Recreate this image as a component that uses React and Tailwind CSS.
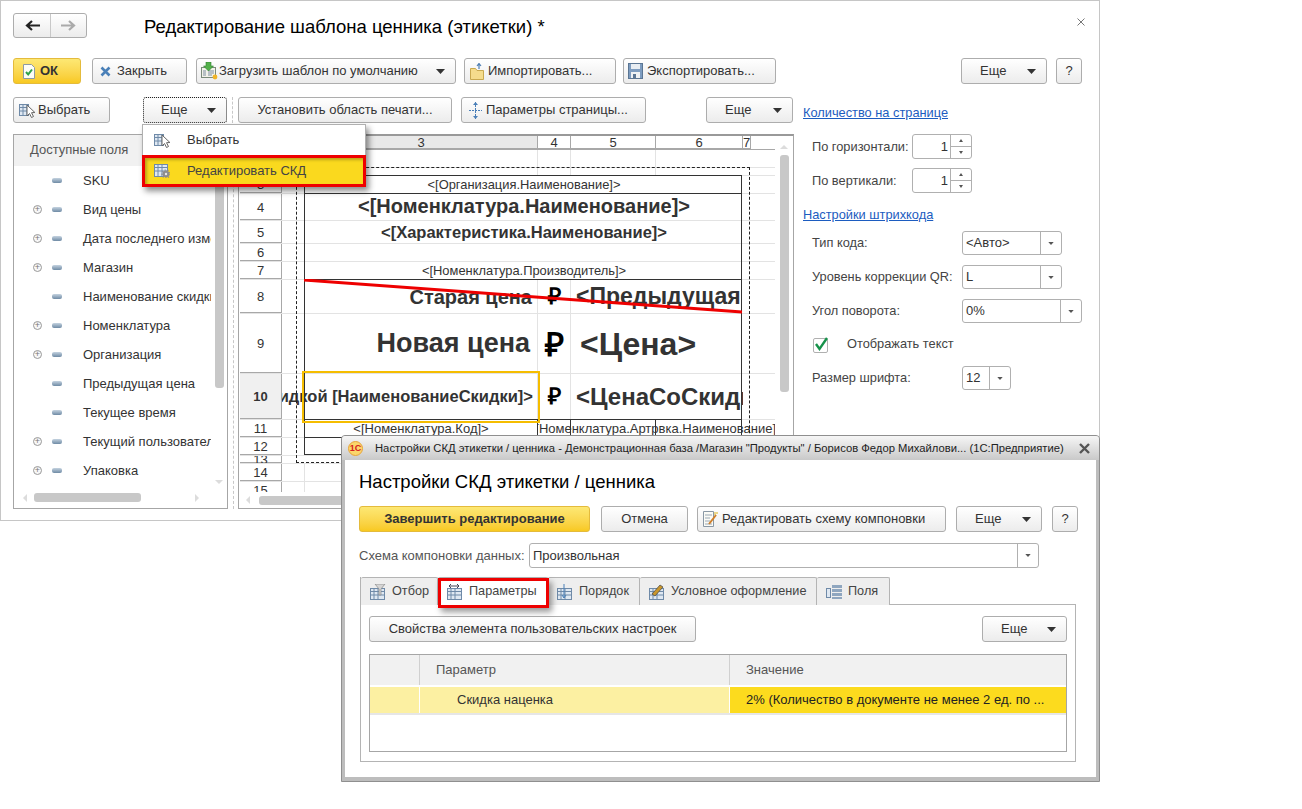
import React from "react";

const Caret = ({ small }) => (
  <svg width={small ? 6 : 9} height={small ? 3 : 5} viewBox="0 0 9 5" className="shrink-0">
    <polygon points="0,0 9,0 4.5,5" fill={small ? "#555" : "#333"} />
  </svg>
);

const Grid = ({ x = 0, y = 3, w = 11, h = 10, c = "#6f8aa8", f = "#dfe8f2" }) => (
  <g>
    <rect x={x + 0.5} y={y + 0.5} width={w} height={h} fill={f} stroke={c} />
    <path d={`M${x + 4} ${y}v${h + 1}M${x + 8} ${y}v${h + 1}M${x} ${y + 3.5}h${w + 1}M${x} ${y + 7}h${w + 1}`} stroke={c} strokeWidth="1" fill="none" />
  </g>
);

const Ico = ({ children, w = 16, h = 16, className = "" }) => (
  <svg width={w} height={h} viewBox={`0 0 ${w} ${h}`} className={"shrink-0 " + className}>{children}</svg>
);

const SelectIcon = () => (
  <Ico w={17} h={17}>
    <Grid x={0} y={2} w={9} h={11} />
    <path d="M8 3l0 11 2.5-2.5 2 4 2-1-2-3.8 3.4-.2z" fill="#fff" stroke="#666" />
  </Ico>
);
const GearTableIcon = () => (
  <Ico w={16} h={14}>
    <Grid x={0} y={0} w={13} h={12} />
    <circle cx="12" cy="10" r="3" fill="#8d8d8d" stroke="#8d8d8d" />
    <circle cx="12" cy="10" r="4" fill="none" stroke="#8d8d8d" strokeWidth="1.2" strokeDasharray="1.4 1.4" />
    <circle cx="12" cy="10" r="1.2" fill="#e8e8e8" />
  </Ico>
);
const OkIcon = () => (
  <Ico w={12} h={15}>
    <path d="M.5.5h8l3 3v11H.5z" fill="#fdfdf6" stroke="#8c9aa5" />
    <path d="M3 8l2.2 2.4L9 5.5" fill="none" stroke="#2fa24a" strokeWidth="2" />
  </Ico>
);
const XIcon = () => (
  <Ico w={11} h={11}>
    <path d="M1.5 1.5l8 8M9.5 1.5l-8 8" stroke="#4a80b8" strokeWidth="2.6" />
  </Ico>
);
const LoadIcon = () => (
  <Ico w={17} h={18}>
    <rect x=".5" y="5.5" width="14" height="10" fill="#f2f2ea" stroke="#7a8a7a" />
    <path d="M2 9h3M2 11h3M2 13h3M7 9h6M7 11h6M7 13h4" stroke="#7c8ea0" />
    <path d="M5 0h5v4h2.5L7.5 9 2.5 4H5z" fill="#53b04a" stroke="#2f7f2f" strokeWidth=".6" />
    <circle cx="14" cy="15" r="2.4" fill="#f0b429" />
  </Ico>
);
const ImportIcon = () => (
  <Ico w={14} h={17}>
    <path d="M.5 5.5h5l1.5 2h6.5v9H.5z" fill="#f5dc8c" stroke="#c9a94f" />
    <path d="M9 6V1M7 3l2-2.5L11 3" stroke="#4e7fb4" fill="none" strokeWidth="1.2" />
  </Ico>
);
const SaveIcon = () => (
  <Ico w={15} h={16}>
    <rect x=".5" y=".5" width="14" height="15" fill="#7d9cc0" stroke="#5b7694" />
    <rect x="3" y="1" width="9" height="5" fill="#e8edf2" />
    <rect x="3" y="9" width="9" height="6" fill="#eef1f4" />
    <rect x="5" y="11" width="3" height="4" fill="#5b7694" />
  </Ico>
);
const PageIcon = () => (
  <Ico w={13} h={17}>
    <path d="M6.5 0v17M0 8.5h13" stroke="#4a7fb8" strokeDasharray="2 1" />
    <path d="M6.5 0L4 3h5zM6.5 17L4 14h5z" fill="#4a7fb8" />
  </Ico>
);
const AttrIcon = () => (
  <span className="block w-[10px] h-[5px] rounded-[2px] bg-gradient-to-b from-[#c5d3e0] to-[#6f8ba5] shrink-0" />
);
const Plus = () => (
  <span className="relative flex items-center justify-center w-[9px] h-[9px] rounded-full border border-[#9a9a9a] bg-[#f7f7f7] text-[#777] text-[9px] leading-none shrink-0">+</span>
);

const Btn = ({ className = "", children, yellow, focus }) => (
  <div
    className={
      "relative flex items-center shrink-0 rounded-[3px] border text-[#333] text-[13px] whitespace-nowrap " +
      (yellow
        ? "border-[#e4bb3c] bg-gradient-to-b from-[#fde873] to-[#f8c91f] "
        : focus
        ? "border-dotted border-[#222] bg-gradient-to-b from-[#ffffff] to-[#ededed] "
        : "border-[#adadad] bg-gradient-to-b from-[#ffffff] to-[#ececec] ") +
      className
    }
  >
    {children}
  </div>
);

const Combo = ({ w, value, h = "h-[24px]", arrowW }) => (
  <div className={"flex items-stretch border border-[#b0b0b0] rounded-[3px] bg-white " + w + " " + h}>
    <div className="flex-1 flex items-center pl-[3px] text-[13px] text-[#333] whitespace-nowrap overflow-hidden">{value}</div>
    <div className={"flex items-center justify-center border-l border-[#b0b0b0] " + arrowW}>
      <Caret small />
    </div>
  </div>
);

const Spin = ({ value }) => (
  <div className="flex items-stretch w-[60px] h-[25px] border border-[#b0b0b0] rounded-[3px] bg-white">
    <div className="flex-1 flex items-center justify-end pr-[2px] text-[13px] text-[#333]">{value}</div>
    <div className="w-[21px] border-l border-[#b0b0b0] flex flex-col">
      <div className="flex-1 flex items-center justify-center border-b border-[#b0b0b0]">
        <svg width="4" height="3"><polygon points="0,3 4,3 2,0" fill="#555" /></svg>
      </div>
      <div className="flex-1 flex items-center justify-center">
        <svg width="4" height="3"><polygon points="0,0 4,0 2,3" fill="#555" /></svg>
      </div>
    </div>
  </div>
);

const treeItems = [
  ["SKU", false], ["Вид цены", true], ["Дата последнего изменения", true], ["Магазин", true],
  ["Наименование скидки", false], ["Номенклатура", true], ["Организация", true], ["Предыдущая цена", false],
  ["Текущее время", false], ["Текущий пользователь", true], ["Упаковка", true],
];

const ScrollArrow = ({ d }) => {
  const pts = { l: "4,0 4,8 0,4", r: "0,0 0,8 4,4", u: "0,4 8,4 4,0", d: "0,0 8,0 4,4" }[d];
  const hz = d === "l" || d === "r";
  return (
    <svg width={hz ? 4 : 8} height={hz ? 8 : 4} className="shrink-0"><polygon points={pts} fill="#dcdcdc" /></svg>
  );
};

const SheetRow = ({ n, h, active, children }) => (
  <div className={"flex shrink-0 border-b border-[#e3e3e3] " + h}>
    <div
      className={
        "w-[42px] shrink-0 flex items-center justify-center border-r border-[#a8a8a8] text-[13px] text-[#333] leading-none overflow-hidden shadow-[inset_0_-1px_0_#a8a8a8] " +
        (active ? "bg-[#f0f0f0] font-bold" : "bg-white")
      }
    >
      {n}
    </div>
    <div className="flex-1 flex items-stretch overflow-hidden text-[#333] whitespace-nowrap">{children}</div>
  </div>
);

const Empty = () => (
  <>
    <div className="w-[23px] shrink-0 border-r border-[#e3e3e3]" />
    <div className="w-[233px] shrink-0 border-r border-[#e3e3e3]" />
    <div className="w-[33px] shrink-0 border-r border-[#e3e3e3]" />
    <div className="w-[85px] shrink-0 border-r border-[#e3e3e3]" />
  </>
);

const Merged = ({ className, children }) => (
  <div className={"ml-[23px] w-[438px] shrink-0 flex items-center justify-center " + className}>{children}</div>
);

const ColHead = ({ w, children, gray }) => (
  <div className={"shrink-0 flex items-center justify-center border-r border-[#a8a8a8] border-b text-[13px] leading-none text-[#333] " + w + (gray ? " bg-[#e9e9e9]" : " bg-white")}>
    {children}
  </div>
);

const Sheet = () => (
  <div className="relative flex-1 overflow-hidden pl-px">
    <div className="flex h-[14px] border-b border-[#a8a8a8]">
      <div className="w-[42px] shrink-0 border-r border-[#a8a8a8]" />
      <div className="w-[23px] shrink-0 bg-[#e9e9e9]" />
      <ColHead w="w-[233px]" gray>3</ColHead>
      <ColHead w="w-[33px]">4</ColHead>
      <ColHead w="w-[85px]">5</ColHead>
      <ColHead w="w-[87px]">6</ColHead>
      <ColHead w="w-[8px]">7</ColHead>
    </div>
    <SheetRow n="" h="h-[18px]"><Empty /></SheetRow>
    <SheetRow n="" h="h-[8px]"><Empty /></SheetRow>
    <SheetRow n="3" h="h-[18px]"><Merged className="text-[12.9px]">{"<[Организация.Наименование]>"}</Merged></SheetRow>
    <SheetRow n="4" h="h-[27px]"><Merged className="text-[20px] font-bold pb-[2px]">{"<[Номенклатура.Наименование]>"}</Merged></SheetRow>
    <SheetRow n="5" h="h-[23px]"><Merged className="text-[16.5px] font-bold">{"<[Характеристика.Наименование]>"}</Merged></SheetRow>
    <SheetRow n="6" h="h-[18px]" />
    <SheetRow n="7" h="h-[18px]"><Merged className="text-[12.9px]">{"<[Номенклатура.Производитель]>"}</Merged></SheetRow>
    <SheetRow n="8" h="h-[34px]">
      <div className="w-[256px] shrink-0 flex items-center justify-end pr-[5px] text-[20px] font-bold border-r border-[#e3e3e3]">Старая цена</div>
      <div className="w-[33px] shrink-0 flex items-center justify-center text-[23px] font-bold text-black border-r border-[#e3e3e3]">₽</div>
      <div className="w-[172px] shrink-0 overflow-hidden flex items-center pl-[5px] text-[23px] font-bold">{"<Предыдущая цена>"}</div>
    </SheetRow>
    <SheetRow n="9" h="h-[60px]">
      <div className="w-[256px] shrink-0 flex items-center justify-end pr-[7px] text-[27px] font-bold border-r border-[#e3e3e3]">Новая цена</div>
      <div className="w-[33px] shrink-0 flex items-center justify-center pt-[3px] text-[33px] font-bold text-black border-r border-[#e3e3e3]">₽</div>
      <div className="w-[172px] shrink-0 overflow-hidden flex items-center pl-[9px] text-[32px] font-bold">{"<Цена>"}</div>
    </SheetRow>
    <SheetRow n="10" h="h-[46px]" active>
      <div className="w-[256px] shrink-0 flex items-center justify-end pr-[4px] text-[16.5px] font-bold border-r border-[#e3e3e3] overflow-hidden">{"<Цена со скидкой [НаименованиеСкидки]>"}</div>
      <div className="w-[33px] shrink-0 flex items-center justify-center text-[23px] font-bold text-black border-r border-[#e3e3e3]">₽</div>
      <div className="w-[172px] shrink-0 overflow-hidden flex items-center pl-[5px] text-[24px] font-bold">{"<ЦенаСоСкидкой>"}</div>
    </SheetRow>
    <SheetRow n="11" h="h-[18px]">
      <div className="ml-[23px] w-[233px] shrink-0 flex items-center justify-center text-[13px] border-r border-[#333]">{"<[Номенклатура.Код]>"}</div>
      <div className="relative w-[238px] shrink-0 flex items-center justify-end text-[13px] overflow-hidden">
        {"<[Номенклатура.Артрвка.Наименование]"}
        <span className="absolute left-[32px] top-0 bottom-0 border-l border-[#333]" />
        <span className="absolute left-[117px] top-0 bottom-0 border-l border-[#333]" />
      </div>
    </SheetRow>
    <SheetRow n="12" h="h-[18px]" />
    <SheetRow n="13" h="h-[8px]" />
    <SheetRow n="14" h="h-[18px]"><Empty /></SheetRow>
    <SheetRow n="15" h="h-[18px]"><Empty /></SheetRow>

    {/* page boundaries, print-area box and drawing objects, all over the cells */}
    <div className="absolute left-[57px] top-[31px] w-[454px] h-[296px] border border-dashed border-[#222]" />
    <div className="absolute left-[65px] top-[39px] w-[438px] h-[280px] border border-[#333]">
      <div className="h-[18px] border-b border-[#333]" />
      <div className="h-[86px] border-b border-[#333]" />
      <div className="h-[140px] border-b border-[#333]" />
      <div className="h-[18px] border-b border-[#333]" />
    </div>
    <svg width="440" height="36" className="absolute left-[65px] top-[143px]">
      <line x1="0" y1="1" x2="438" y2="33" stroke="#ee0000" strokeWidth="3" />
    </svg>
    <div className="absolute left-[63px] top-[235px] w-[238px] h-[52px] border-2 border-[#f5bd00]" />
  </div>
);

const Panels = () => (
  <div className="flex h-[375px] mt-[11px]">
    <div className="w-[215px] shrink-0 border border-[#a6a6a6] flex flex-col bg-white">
      <div className="h-[31px] shrink-0 bg-[#f1f1f1] flex items-center pl-[16px] pb-[2px] text-[13px] text-[#555]">Доступные поля</div>
      <div className="flex-1 flex min-h-0">
        <div className="w-[197px] shrink-0 overflow-hidden">
          {treeItems.map(([t, plus]) => (
            <div key={t} className="flex items-center h-[29px] whitespace-nowrap text-[13px] text-[#333]">
              <span className="w-[19px] shrink-0" />
              <span className="w-[13px] shrink-0 flex">{plus && <Plus />}</span>
              <span className="w-[6px] shrink-0" />
              <AttrIcon />
              <span className="w-[21px] shrink-0" />
              <span>{t}</span>
            </div>
          ))}
        </div>
        <div className="flex-1 flex flex-col items-center">
          <div className="w-[9px] h-[222px] bg-[#c8c8c8] rounded-b-[3px]" />
          <div className="mt-[92px]"><ScrollArrow d="d" /></div>
        </div>
      </div>
      <div className="h-[17px] shrink-0 flex items-center pl-[9px] pb-[4px]">
        <ScrollArrow d="l" />
        <div className="ml-[7px] w-[107px] h-[9px] rounded-[3px] bg-[#c8c8c8]" />
        <div className="ml-[54px]"><ScrollArrow d="r" /></div>
      </div>
    </div>
    <div className="w-[10px] shrink-0 flex justify-center">
      <div className="border-l border-dashed border-[#c8c8c8]" />
    </div>
    <div className="w-[556px] shrink-0 border border-[#a6a6a6] border-t-2 border-t-[#999] flex flex-col bg-white">
      <div className="flex flex-1 min-h-0">
        <Sheet />
        <div className="w-[18px] shrink-0 flex flex-col items-center pt-[9px]">
          <ScrollArrow d="u" />
          <div className="mt-[6px] w-[9px] h-[237px] rounded-[3px] bg-[#c8c8c8]" />
        </div>
      </div>
      <div className="h-[16px] shrink-0 flex items-center pl-[7px]">
        <ScrollArrow d="l" />
        <div className="ml-[9px] w-[100px] h-[9px] rounded-[3px] bg-[#c8c8c8]" />
      </div>
    </div>
  </div>
);

const Right = () => (
  <div className="ml-[9px] w-[285px] text-[12.8px] text-[#444]">
    <div className="h-[16px] mt-[8px] text-[#1c5cc0] underline leading-[16px]">Количество на странице</div>
    <div className="flex items-center mt-[13px] pl-[9px]"><span className="w-[100px]">По горизонтали:</span><Spin value="1" /></div>
    <div className="flex items-center mt-[9px] pl-[9px]"><span className="w-[100px]">По вертикали:</span><Spin value="1" /></div>
    <div className="h-[16px] mt-[14px] text-[#1c5cc0] underline leading-[16px]">Настройки штрихкода</div>
    <div className="flex items-center mt-[8px] pl-[9px]"><span className="w-[150px]">Тип кода:</span><Combo w="w-[100px]" value="<Авто>" arrowW="w-[21px]" /></div>
    <div className="flex items-center mt-[10px] pl-[9px]"><span className="w-[150px]">Уровень коррекции QR:</span><Combo w="w-[100px]" value="L" arrowW="w-[21px]" /></div>
    <div className="flex items-center mt-[10px] pl-[9px]"><span className="w-[150px]">Угол поворота:</span><Combo w="w-[120px]" value="0%" arrowW="w-[21px]" /></div>
    <div className="flex items-center mt-[12px] pl-[10px] h-[18px]">
      <div className="relative w-[15px] h-[15px] border border-[#b0b0b0] rounded-[2px] bg-white mt-[2px]">
        <svg width="16" height="16" className="absolute -left-px -top-[3px]"><path d="M3 8l3.5 5L14 2" fill="none" stroke="#16924a" strokeWidth="2.4" /></svg>
      </div>
      <span className="ml-[19px]">Отображать текст</span>
    </div>
    <div className="flex items-center mt-[13px] pl-[9px]"><span className="w-[150px]">Размер шрифта:</span><Combo w="w-[49px]" value="12" arrowW="w-[21px]" /></div>
  </div>
);

const MainWindow = () => (
  <div className="w-[1100px] h-[521px] border border-[#c6c6c6] pl-[12px] pr-[17px] bg-white">
    <div className="flex items-center mt-[12px] h-[25px]">
      <div className="flex w-[74px] h-[25px] rounded-[3px] border border-[#adadad] bg-gradient-to-b from-[#ffffff] to-[#ececec]">
        <div className="w-[37px] flex items-center justify-center border-r border-[#c8c8c8]">
          <svg width="15" height="11"><path d="M15 5.5H3M7 1L2 5.5 7 10" fill="none" stroke="#222" strokeWidth="2.2" /></svg>
        </div>
        <div className="flex-1 flex items-center justify-center">
          <svg width="15" height="11"><path d="M0 5.5h12M8 1l5 4.5L8 10" fill="none" stroke="#aaa" strokeWidth="2.2" /></svg>
        </div>
      </div>
      <div className="ml-[57px] pt-[3px] text-[18.5px] text-black whitespace-nowrap">Редактирование шаблона ценника (этикетки) *</div>
      <svg width="8" height="8" className="ml-auto mr-[-3px] -mt-[7px]"><path d="M.5.5l7 7M7.5.5l-7 7" stroke="#777" strokeWidth="1" /></svg>
    </div>

    <div className="flex mt-[20px] h-[26px]">
      <Btn yellow className="w-[68px] pl-[9px] gap-[4px] font-bold"><OkIcon /><span className="ml-[1px]">ОК</span></Btn>
      <Btn className="w-[95px] ml-[11px] pl-[7px] gap-[6px]"><XIcon />Закрыть</Btn>
      <Btn className="w-[260px] ml-[9px] pl-[4px] gap-[1px]"><LoadIcon />Загрузить шаблон по умолчанию<span className="ml-auto mr-[10px]"><Caret /></span></Btn>
      <Btn className="w-[152px] ml-[8px] pl-[5px] gap-[4px]"><ImportIcon />Импортировать...</Btn>
      <Btn className="w-[153px] ml-[7px] pl-[4px] gap-[4px]"><SaveIcon />Экспортировать...</Btn>
      <Btn className="w-[86px] ml-auto pl-[18px]">Еще<span className="ml-auto mr-[10px]"><Caret /></span></Btn>
      <Btn className="w-[26px] ml-[9px] justify-center">?</Btn>
    </div>

    <div className="flex mt-[13px]">
      <div className="w-[781px] shrink-0">
        <div className="flex h-[26px]">
          <Btn className="w-[97px] pl-[5px] gap-[2px]"><SelectIcon />Выбрать</Btn>
          <Btn focus className="w-[84px] ml-[33px] pl-[17px]">Еще<span className="ml-auto mr-[10px]"><Caret /></span></Btn>
          <div className="w-[11px] shrink-0 flex justify-center"><div className="border-l border-dashed border-[#c8c8c8]" /></div>
          <Btn className="w-[214px] justify-center">Установить область печати...</Btn>
          <Btn className="w-[185px] ml-[9px] pl-[7px] gap-[4px]"><PageIcon />Параметры страницы...</Btn>
          <Btn className="w-[87px] ml-[60px] pl-[18px]">Еще<span className="ml-auto mr-[10px]"><Caret /></span></Btn>
        </div>
        <Panels />
      </div>
      <Right />
    </div>
  </div>
);

const Menu = () => (
  <div className="absolute left-[142px] top-[124px] w-[224px] shadow-[3px_4px_6px_rgba(0,0,0,0.45)] bg-white">
    <div className="h-[31px] border border-b-0 border-[#b0b0b0] flex items-center pl-[11px] text-[13px] text-[#333]">
      <SelectIcon /><span className="ml-[16px]">Выбрать</span>
    </div>
    <div className="h-[32px] border-[3px] border-[#ee0000] bg-[#fad91e] flex items-center pl-[9px] text-[13px] text-[#444] shadow-[inset_2px_2px_3px_rgba(0,0,0,0.25)]">
      <GearTableIcon /><span className="ml-[17px]">Редактировать СКД</span>
    </div>
  </div>
);

const Tab = ({ w, icon, label, active }) => (
  <div
    className={
      "flex items-center h-[28px] shrink-0 text-[12.7px] text-[#444] border-t border-r border-[#b4b4b4] rounded-t-[2px] " +
      w + " " + (active ? "bg-white" : "bg-[#eeeeee]")
    }
  >
    {icon}
    <span className="ml-[5px]">{label}</span>
  </div>
);

const TabIcon = ({ top }) => (
  <Ico w={18} h={16} className="ml-[8px]">
    <Grid x={1} y={4} w={14} h={11} />
    {top}
  </Ico>
);

const Dialog = () => (
  <div className="absolute left-[341px] top-[435px] w-[759px] h-[347px] rounded-t-[4px] border border-[#8f8f8f] bg-[#bdbdbd] flex flex-col px-[3px] pb-[4px] text-[13px]">
    <div className="h-[24px] shrink-0 -mx-[3px] flex items-center bg-gradient-to-b from-[#f6f6f6] to-[#c9c9c9] rounded-t-[3px] text-[11.26px] text-[#222] whitespace-nowrap">
      <span className="ml-[6px] w-[15px] h-[15px] rounded-full border border-[#e8a33a] bg-[#fbd66b] flex items-center justify-center text-[9px] font-bold text-[#d42020] leading-none">1С</span>
      <span className="ml-[12px] w-[691px] overflow-hidden">Настройки СКД этикетки / ценника - Демонстрационная база /Магазин "Продукты" / Борисов Федор Михайлови...  (1С:Предприятие)</span>
      <svg width="11" height="11" className="ml-[13px]"><path d="M1 1l9 9M10 1l-9 9" stroke="#555" strokeWidth="2.4" /></svg>
    </div>
    <div className="flex-1 bg-white pl-[14px] pr-[20px] min-h-0">
      <div className="mt-[10px] h-[22px] pt-px text-[18.5px] leading-[22px] text-black whitespace-nowrap">Настройки СКД этикетки / ценника</div>
      <div className="flex mt-[14px] h-[26px]">
        <Btn yellow className="w-[231px] justify-center font-bold">Завершить редактирование</Btn>
        <Btn className="w-[87px] ml-[11px] justify-center">Отмена</Btn>
        <Btn className="w-[249px] ml-[9px] pl-[5px] gap-[4px]">
          <Ico w={15} h={16}>
            <path d="M.5.5h10v15H.5z" fill="#fbfbf6" stroke="#8a98a5" />
            <path d="M2 4h7M2 7h5M2 10h5M2 13h7" stroke="#9aa8b5" />
            <path d="M6 13L13 4" stroke="#d0802c" strokeWidth="2" />
            <path d="M12 1v3M13 2h3" stroke="#d9b21c" />
          </Ico>
          Редактировать схему компоновки
        </Btn>
        <Btn className="w-[86px] ml-[10px] pl-[18px]">Еще<span className="ml-auto mr-[10px]"><Caret /></span></Btn>
        <Btn className="w-[26px] ml-[10px] justify-center">?</Btn>
      </div>
      <div className="flex items-center mt-[11px] h-[25px]">
        <span className="w-[170px] text-[#555] whitespace-nowrap">Схема компоновки данных:</span>
        <Combo w="w-[510px]" h="h-[25px]" value="Произвольная" arrowW="w-[21px]" />
      </div>
      <div className="flex mt-[9px] ml-px">
        <div className="flex border-l border-[#b4b4b4]">
          <Tab w="w-[77px]" label="Отбор" icon={<TabIcon top={<path d="M6 0h10l-4 5v6H10V5z" fill="#d5d5d5" stroke="#888" strokeWidth=".7" />} />} />
          <Tab w="w-[110px]" active label="Параметры" icon={<TabIcon top={<path d="M3 2h10M3 2l2-2M3 2l2 2M13 2l-2-2M13 2l-2 2" stroke="#445" fill="none" />} />} />
          <Tab w="w-[92px]" label="Порядок" icon={<TabIcon top={<path d="M8 0v14M6 11l2 3 2-3" stroke="#4a80b8" fill="none" />} />} />
          <Tab w="w-[177px]" label="Условное оформление" icon={<TabIcon top={<path d="M4 10L12 1l3 2-8 9z" fill="#c9962c" stroke="#444" strokeWidth=".7" />} />} />
          <Tab w="w-[73px]" label="Поля" icon={
            <Ico w={18} h={15} className="ml-[8px]">
              <rect x="1.5" y="4.5" width="4" height="9" fill="#dfe8f2" stroke="#6f8aa8" />
              <rect x="7" y="1" width="10" height="3" fill="#8fa6bf" />
              <rect x="7" y="5" width="10" height="3" fill="#8fa6bf" />
              <rect x="7" y="9" width="10" height="3" fill="#8fa6bf" />
              <rect x="7" y="13" width="10" height="2" fill="#8fa6bf" />
            </Ico>
          } />
        </div>
      </div>
      <div className="h-[158px] border border-[#b4b4b4] -mt-px ml-px pt-[11px] px-[8px]">
        <div className="flex justify-between h-[26px]">
          <Btn className="w-[327px] justify-center">Свойства элемента пользовательских настроек</Btn>
          <Btn className="w-[85px] pl-[18px]">Еще<span className="ml-auto mr-[10px]"><Caret /></span></Btn>
        </div>
        <div className="mt-[12px] h-[98px] border border-[#a6a6a6] flex flex-col">
          <div className="flex h-[32px] bg-[#f1f1f1] border-b-2 border-white text-[#555]">
            <div className="w-[50px] border-r border-[#d0d0d0]" />
            <div className="w-[310px] border-r border-[#d0d0d0] flex items-center pl-[16px]">Параметр</div>
            <div className="flex-1 flex items-center pl-[16px]">Значение</div>
          </div>
          <div className="flex h-[28px] border-b-2 border-[#e6e6e6] bg-[#fcf0a2] text-[#333]">
            <div className="w-[50px] border-r border-white" />
            <div className="w-[310px] border-r border-white flex items-center pl-[37px]">Скидка наценка</div>
            <div className="flex-1 flex items-center pl-[16px] bg-[#fcdb1e] text-[#222] whitespace-nowrap">2% (Количество в документе не менее 2 ед. по ...</div>
          </div>
        </div>
      </div>
    </div>
    {/* highlight frame around the active tab */}
    <div className="absolute left-[96px] top-[142px] w-[111px] h-[30px] border-[3px] border-[#ee0000] shadow-[3px_4px_6px_rgba(0,0,0,0.4)]" />
  </div>
);

export default function App() {
  return (
    <div className="relative w-[1302px] h-[809px] bg-white font-['Liberation_Sans',sans-serif] overflow-hidden">
      <MainWindow />
      <Menu />
      <Dialog />
    </div>
  );
}
